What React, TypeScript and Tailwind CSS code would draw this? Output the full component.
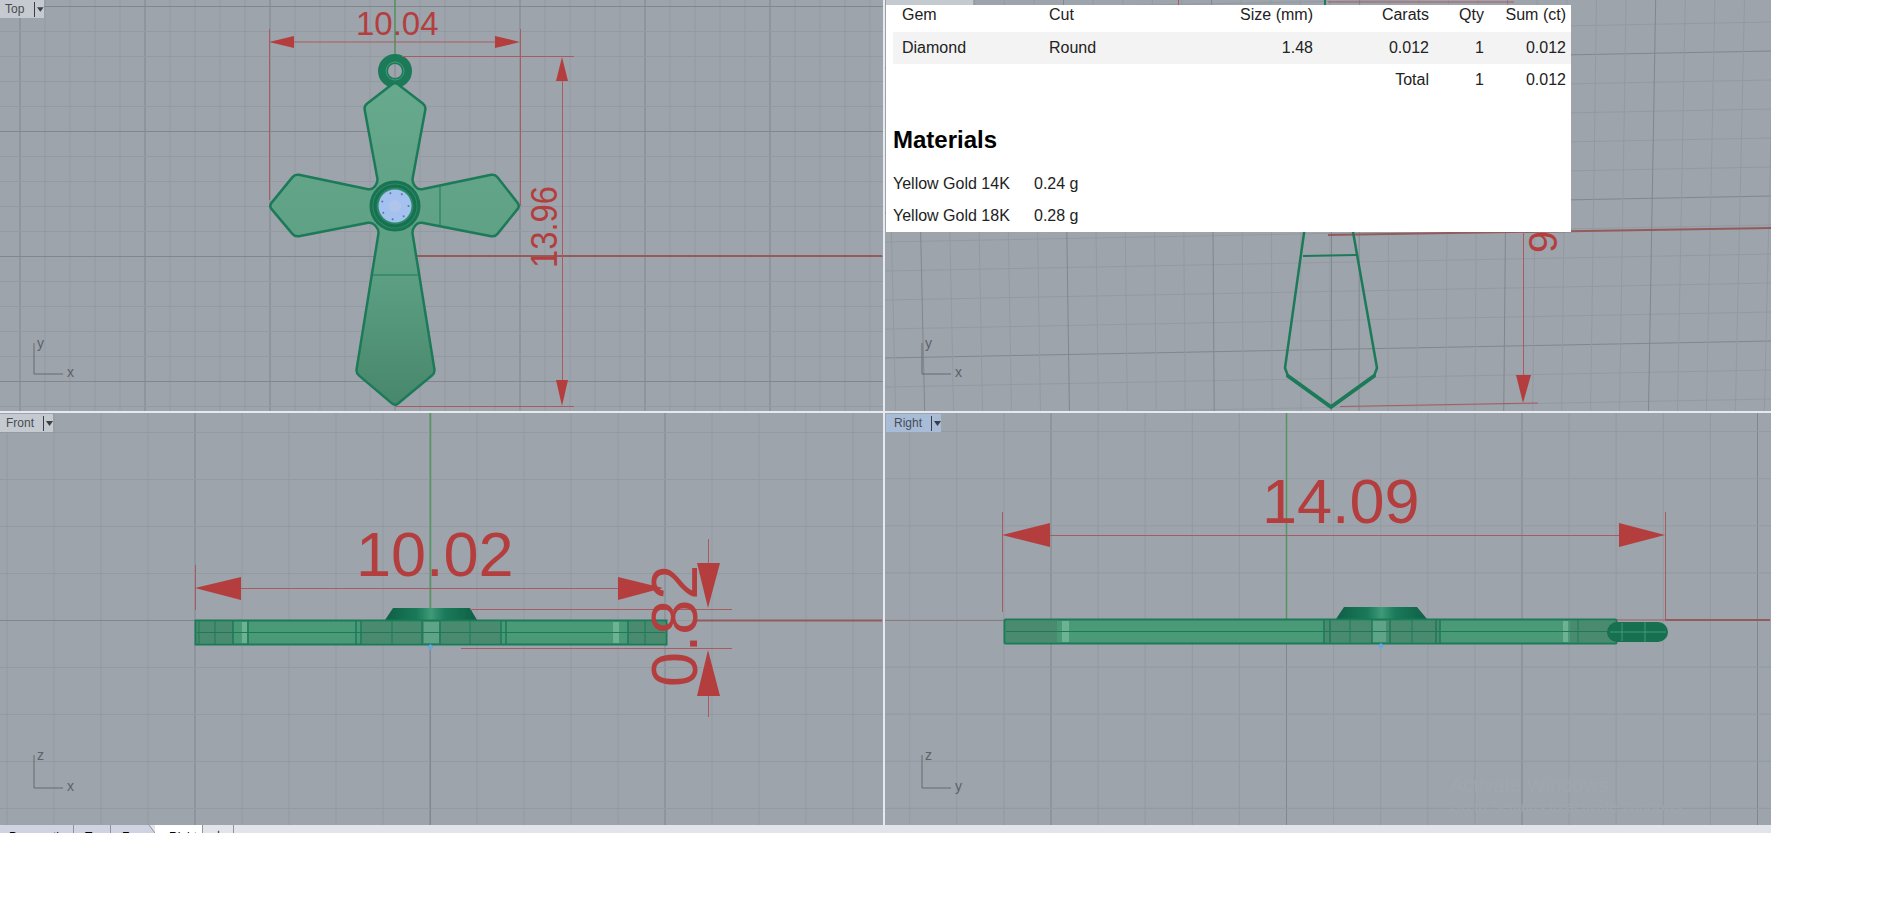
const RED = '#b43e3e'
const LINE = '#a65c60'
const AXIS = '#945a5c'
const GREEN = '#1c7a58'
const GREEN_AXIS = '#55965f'
const MINOR = '#939aa2'
const MAJOR = '#80878e'

const range = (from: number, to: number, step: number) => {
  const out: number[] = []
  for (let v = from; v <= to; v += step) out.push(v)
  return out
}

// Closed outline with its corners eased by `r` px
const roundedPath = (pts: number[][], r: number) => {
  const n = pts.length
  let d = ''
  pts.forEach((p, i) => {
    const a = pts[(i + n - 1) % n]
    const b = pts[(i + 1) % n]
    const la = Math.hypot(a[0] - p[0], a[1] - p[1])
    const lb = Math.hypot(b[0] - p[0], b[1] - p[1])
    const s = [p[0] + ((a[0] - p[0]) * r) / la, p[1] + ((a[1] - p[1]) * r) / la]
    const e = [p[0] + ((b[0] - p[0]) * r) / lb, p[1] + ((b[1] - p[1]) * r) / lb]
    d += `${i === 0 ? 'M' : 'L'}${s[0].toFixed(1)} ${s[1].toFixed(1)}Q${p[0]} ${p[1]} ${e[0].toFixed(1)} ${e[1].toFixed(1)}`
  })
  return d + 'Z'
}

const CROSS = [
  [395, 82], [426, 106], [412, 182], [418, 190], [495, 174], [520, 206], [495, 237], [418, 222], [412, 230],
  [435, 373], [395, 406], [356, 373], [379, 230], [372, 222], [295, 237], [269, 206], [295, 174], [372, 190], [378, 182], [364, 106],
]

// Flat view grid, lines every `step` px, a heavier one every fifth
function Grid({ x0, x1, y0, y1, ox, oy, step }: { x0: number; x1: number; y0: number; y1: number; ox: number; oy: number; step: number }) {
  const xs = range(ox - step * 5, x1, step).filter((x) => x >= x0)
  const ys = range(oy - step * 20, y1, step).filter((y) => y >= y0)
  return (
    <g>
      {xs.map((x) => {
        const k = Math.round((x - ox) / step)
        return <line key={x} x1={x} x2={x} y1={y0} y2={y1} stroke={k % 5 === 0 ? MAJOR : MINOR} strokeWidth={1} />
      })}
      {ys.map((y) => (
        <line key={y} x1={x0} x2={x1} y1={y} y2={y} stroke={MINOR} strokeWidth={1} />
      ))}
    </g>
  )
}

function Triangle({ points }: { points: string }) {
  return <polygon points={points} fill={RED} />
}

function DomeGradient({ id }: { id: string }) {
  return (
    <linearGradient id={id} x1="0" y1="0" x2="1" y2="0">
      <stop offset="0" stopColor="#0f5f45" />
      <stop offset="0.35" stopColor="#1a7a5a" />
      <stop offset="0.5" stopColor="#3f9a78" />
      <stop offset="0.65" stopColor="#1a7a5a" />
      <stop offset="1" stopColor="#0f5f45" />
    </linearGradient>
  )
}

function AxisIcon({ x, y, v, h, hx = 36, top = 31 }: { x: number; y: number; v: string; h: string; hx?: number; top?: number }) {
  return (
    <g>
      <path d={`M${x} ${y - top}V${y}H${x + 29}`} fill="none" stroke="#656b72" strokeWidth={1} />
      <text x={x + 3} y={y - top + 5} fontSize={14} fill="#5c6268">{v}</text>
      <text x={x + hx - 3} y={y + 3} fontSize={14} fill="#5c6268">{h}</text>
    </g>
  )
}

function ViewLabel({ name, className, textClass, active }: { name: string; className: string; textClass: string; active?: boolean }) {
  return (
    <div className={`absolute flex h-[18px] items-center ${className} ${active ? 'bg-[#a8bcd8]' : 'bg-[#c4cad0]'}`}>
      <span className={`text-[12px] text-[#474c52] ${textClass}`}>{name}</span>
      <span className="mx-[2px] h-[15px] w-px bg-[#3a3f45]" />
      <svg width="7" height="5" viewBox="0 0 7 5"><path d="M0 0h7L3.5 5z" fill="#3a3f45" /></svg>
    </div>
  )
}

function TopView() {
  return (
    <div className="relative h-full w-[883px] overflow-hidden bg-[#9da4ac]">
      <svg className="absolute inset-0 h-full w-full" viewBox="0 0 883 411">
        <defs>
          <linearGradient id="crossFill" gradientUnits="userSpaceOnUse" x1="0" y1="82" x2="0" y2="406">
            <stop offset="0" stopColor="#66a98c" />
            <stop offset="0.6" stopColor="#5c9f82" />
            <stop offset="1" stopColor="#47876b" />
          </linearGradient>
        </defs>
        <Grid x0={0} x1={883} y0={0} y1={411} ox={20} oy={6.5} step={25} />
        {[131.5, 256.5, 381.5, 6.5].map((y) => (
          <line key={y} x1={0} x2={883} y1={y} y2={y} stroke={MAJOR} />
        ))}
        <line x1={395} x2={395} y1={0} y2={56} stroke={GREEN_AXIS} strokeWidth={1.5} />
        <line x1={416} x2={882} y1={256} y2={256} stroke={AXIS} strokeWidth={2} />

        {/* pendant */}
        <ellipse cx={395} cy={71} rx={12} ry={12} fill="none" stroke={GREEN} strokeWidth={10} />
        <ellipse cx={395} cy={71} rx={9} ry={9} fill="none" stroke="#3f9c79" strokeWidth={1} />
        <path d={roundedPath(CROSS, 4)} fill="url(#crossFill)" stroke={GREEN} strokeWidth={2.5} strokeLinejoin="round" />
        <line x1={372} x2={418} y1={275} y2={275} stroke={GREEN} />
        <line x1={440} x2={440} y1={187} y2={226} stroke={GREEN} />
        <circle cx={395} cy={206} r={24} fill="#2a8a66" stroke="#1a7453" strokeWidth={3} />
        <circle cx={395} cy={206} r={20} fill="none" stroke="#17704f" strokeWidth={3} />
        <circle cx={395} cy={206} r={16.5} fill="#a5c1ef" />
        <circle cx={395} cy={206} r={6} fill="#afc6ea" />
        {[0, 50, 100, 150, 200, 250, 300].map((a) => (
          <circle key={a} cx={395 + 13.5 * Math.cos((a * Math.PI) / 180)} cy={206 + 13.5 * Math.sin((a * Math.PI) / 180)} r={1} fill="#5d74a6" />
        ))}

        {/* 10.04 */}
        <path d="M269.5 29V200M520.5 29V206M285 42H505" stroke={LINE} fill="none" />
        <Triangle points="269,42 294,36 294,48" />
        <Triangle points="520,42 495,36 495,48" />
        <text x={356} y={35} fontSize={33} fill={RED}>10.04</text>

        {/* 13.96 */}
        <path d="M402 56.5H574M395 406.5H574M562.5 70V395" stroke={LINE} fill="none" />
        <Triangle points="562,57 556,81 568,81" />
        <Triangle points="562,406 556,380 568,380" />
        <text transform="translate(557 268) rotate(-90)" fontSize={36} fill={RED} textLength={82} lengthAdjust="spacingAndGlyphs">13.96</text>

        <AxisIcon x={34} y={374} v="y" h="x" />
      </svg>
      <ViewLabel name="Top" className="left-0 top-0 w-[44px]" textClass="ml-[5px] w-[29px]" />
    </div>
  )
}

function PerspectiveView() {
  const ys = range(-48, 416, 29)
  const xs = range(-7, 174, 1).map((k) => 892 + 29.2 * k).filter((x) => x < 1775)
  return (
    <div className="relative h-full w-[886px] overflow-hidden bg-[#9da4ac]">
      <svg className="absolute inset-0 h-full w-full" viewBox="885 0 886 411">
        {ys.map((y, i) => (
          <line key={y} x1={885} x2={1771} y1={y} y2={y - 17} stroke={(i + 1) % 5 === 0 ? MAJOR : MINOR} />
        ))}
        {xs.map((x, i) => {
          const lean = (1331 - x) * 0.014
          return <line key={x} x1={x - lean} x2={x + lean * 0.6} y1={0} y2={411} stroke={(i + 2) % 5 === 0 ? MAJOR : MINOR} />
        })}
        <line x1={1331.5} x2={1331.5} y1={230} y2={411} stroke={MAJOR} />

        <path d="M1178.5 0V6M1328 2H1514" stroke={LINE} fill="none" />
        <line x1={1325} x2={1325} y1={0} y2={6} stroke={GREEN} strokeWidth={2} />
        <line x1={1328} x2={1771} y1={235} y2={228} stroke={AXIS} strokeWidth={2} />

        {/* lower arm seen through */}
        <path d="M1305 226L1285 368L1288 376L1331 407L1374 376L1377 368L1352 226" fill="none" stroke={GREEN} strokeWidth={2.5} strokeLinejoin="round" />
        <path d="M1288 376L1331 407L1374 376" fill="none" stroke={GREEN} strokeWidth={4} strokeLinejoin="round" strokeLinecap="round" />
        <line x1={1303} x2={1356} y1={256} y2={255} stroke={GREEN} strokeWidth={2} />

        <path d="M1523.5 226V380M1340 406.5L1538 403" stroke={LINE} fill="none" />
        <Triangle points="1523,403 1516,375 1531,375" />
        <text transform="translate(1557 253) rotate(-90)" fontSize={40} fill={RED}>9</text>

        <AxisIcon x={922} y={374} v="y" h="x" />
      </svg>
      <div className="absolute left-[1px] top-0 h-[5px] w-[87px] bg-[#c4cad0]" />

      {/* gem and material summary */}
      <div className="absolute left-[1px] top-[5px] flex h-[227px] w-[685px] flex-col bg-white pl-[7px] text-[16px] leading-[20px] text-[#222222]">
        <table className="w-full table-fixed border-collapse">
          <colgroup>
            <col className="w-[147px]" />
            <col className="w-[160px]" />
            <col className="w-[118px]" />
            <col className="w-[116px]" />
            <col className="w-[55px]" />
            <col />
          </colgroup>
          <thead>
            <tr className="h-[27px] font-normal">
              <th className="pb-[7px] pl-[9px] text-left font-normal">Gem</th>
              <th className="pb-[7px] pl-[9px] text-left font-normal">Cut</th>
              <th className="pb-[7px] pr-[5px] text-right font-normal">Size (mm)</th>
              <th className="pb-[7px] pr-[5px] text-right font-normal">Carats</th>
              <th className="pb-[7px] pr-[5px] text-right font-normal">Qty</th>
              <th className="pb-[7px] pr-[5px] text-right font-normal">Sum (ct)</th>
            </tr>
          </thead>
          <tbody>
            <tr className="h-[32px] bg-[#f3f3f3]">
              <td className="pl-[9px]">Diamond</td>
              <td className="pl-[9px]">Round</td>
              <td className="pr-[5px] text-right">1.48</td>
              <td className="pr-[5px] text-right">0.012</td>
              <td className="pr-[5px] text-right">1</td>
              <td className="pr-[5px] text-right">0.012</td>
            </tr>
            <tr className="h-[32px]">
              <td />
              <td />
              <td />
              <td className="pr-[5px] text-right">Total</td>
              <td className="pr-[5px] text-right">1</td>
              <td className="pr-[5px] text-right">0.012</td>
            </tr>
          </tbody>
        </table>
        <h2 className="mt-[28px] text-[24px] font-bold leading-[32px] text-black">Materials</h2>
        <div className="mt-[12px] grid grid-cols-[141px_1fr]">
          <div className="flex h-[32px] items-center">Yellow Gold 14K</div>
          <div className="flex h-[32px] items-center">0.24 g</div>
          <div className="flex h-[32px] items-center">Yellow Gold 18K</div>
          <div className="flex h-[32px] items-center">0.28 g</div>
        </div>
      </div>
    </div>
  )
}

function FrontView() {
  return (
    <div className="relative h-full w-[883px] overflow-hidden bg-[#9da4ac]">
      <svg className="absolute inset-0 h-full w-full" viewBox="0 413 883 412">
        <defs>
          <DomeGradient id="domeFill" />
        </defs>
        <Grid x0={0} x1={883} y0={413} y1={825} ox={195} oy={620.5} step={47} />
        <line x1={0} x2={195} y1={620.5} y2={620.5} stroke={MAJOR} />
        <line x1={430.5} x2={430.5} y1={413} y2={620} stroke={GREEN_AXIS} strokeWidth={1.5} />
        <line x1={430.5} x2={430.5} y1={644} y2={825} stroke={MAJOR} />
        <line x1={697} x2={882} y1={620.5} y2={620.5} stroke={AXIS} strokeWidth={2} />

        {/* side profile */}
        <polygon points="385,620 393,608 470,608 477,620" fill="url(#domeFill)" />
        <rect x={195.5} y={620.5} width={471} height={24} fill="#4a9a78" />
        <rect x={197} y={622} width={36} height={21} fill="#4a8a6e" />
        <rect x={362} y={622} width={138} height={21} fill="#4a8a6e" />
        <rect x={628} y={622} width={37} height={21} fill="#4a8a6e" />
        <rect x={242} y={622} width={5} height={21} fill="#6db392" />
        <rect x={424} y={622} width={15} height={21} fill="#5fa486" />
        <rect x={613} y={622} width={6} height={21} fill="#6db392" />
        <path d="M197 632.5H665M199 621V644M215 621V644M392 621V644M470 621V644M645 621V644" stroke={GREEN} fill="none" />
        <path d="M233 621V644M248 621V644M356 621V644M361 621V644M422 621V644M440 621V644M501 621V644M506 621V644M628 621V644" stroke={GREEN} strokeWidth={1.5} fill="none" />
        <rect x={195.5} y={620.5} width={471} height={24} fill="none" stroke={GREEN} strokeWidth={2} />
        <path d="M430.5 644l-3 3 3 3 3-3z" fill="#63a8e0" />

        {/* 10.02 */}
        <path d="M195.5 565V610M241 588.5H620" stroke={LINE} fill="none" />
        <Triangle points="195,588 241,577 241,600" />
        <Triangle points="663,588 618,577 618,600" />
        <text x={356} y={576} fontSize={63} fill={RED}>10.02</text>

        {/* 0.82 */}
        <path d="M708.5 539V563M708.5 696V717M470 609.5H732M461 648.5H732" stroke={LINE} fill="none" />
        <Triangle points="708,608 697,563 720,563" />
        <Triangle points="708,650 697,696 720,696" />
        <text transform="translate(697 687) rotate(-90)" fontSize={64} fill={RED} textLength={122} lengthAdjust="spacingAndGlyphs">0.82</text>

        <AxisIcon x={34} y={788} v="z" h="x" top={33} />
      </svg>
      <ViewLabel name="Front" className="left-0 top-[1px] w-[53px]" textClass="ml-[6px] w-[35px]" />
    </div>
  )
}

function RightView() {
  return (
    <div className="relative h-full w-[886px] overflow-hidden bg-[#9da4ac]">
      <svg className="absolute inset-0 h-full w-full" viewBox="885 413 886 412">
        <defs>
          <DomeGradient id="domeFillRight" />
        </defs>
        <Grid x0={885} x1={1771} y0={413} y1={825} ox={1051} oy={620} step={47.1} />
        <line x1={885} x2={1004} y1={620.5} y2={620.5} stroke="#8a7c80" />
        <line x1={1286.5} x2={1286.5} y1={413} y2={619} stroke={GREEN_AXIS} strokeWidth={1.5} />
        <line x1={1617} x2={1665} y1={620} y2={620} stroke={LINE} />
        <line x1={1665} x2={1770} y1={620} y2={620} stroke={AXIS} strokeWidth={2} />

        <text x={1450} y={792} fontSize={20} fill="#a0a7ae">Activate Windows</text>
        <text x={1450} y={812} fontSize={15} fill="#9fa6ae">Go to Settings to activate Windows.</text>

        {/* side profile */}
        <polygon points="1336,619 1344,607 1417,607 1427,619" fill="url(#domeFillRight)" />
        <rect x={1004.5} y={619.5} width={612} height={24} rx={1} fill="#4a9a78" />
        <rect x={1006} y={621} width={51} height={21} fill="#4a8a6e" />
        <rect x={1324} y={621} width={116} height={21} fill="#4a8a6e" />
        <rect x={1570} y={621} width={46} height={21} fill="#4a8a6e" />
        <rect x={1062} y={621} width={7} height={21} fill="#6db392" />
        <rect x={1372} y={621} width={14} height={21} fill="#5fa486" />
        <rect x={1563} y={621} width={5} height={21} fill="#6db392" />
        <path d="M1006 631.5H1616M1350 620V643M1412 620V643M1578 620V643" stroke={GREEN} fill="none" />
        <path d="M1324 620V643M1330 620V643M1372 620V643M1390 620V643M1436 620V643M1440 620V643" stroke={GREEN} strokeWidth={1.5} fill="none" />
        <rect x={1004.5} y={619.5} width={612} height={24} rx={1} fill="none" stroke={GREEN} strokeWidth={2} />
        <rect x={1607} y={622} width={61} height={20} rx={10} fill="#17704f" />
        <path d="M1622 623V641M1645 622V642M1610 632H1666" stroke="#3f9a78" fill="none" />
        <path d="M1381 643l-3 3 3 3 3-3z" fill="#63a8e0" />

        {/* 14.09 */}
        <path d="M1002.5 512V612M1665.5 512V620M1045 535.5H1625" stroke={LINE} fill="none" />
        <Triangle points="1002,535 1050,523 1050,547" />
        <Triangle points="1665,535 1619,523 1619,547" />
        <text x={1262} y={523} fontSize={63} fill={RED}>14.09</text>

        <AxisIcon x={922} y={788} v="z" h="y" top={33} />
      </svg>
      <ViewLabel name="Right" active className="left-[1px] top-[1px] w-[55px]" textClass="ml-[8px] w-[35px]" />
    </div>
  )
}

function Tabs() {
  return (
    <div className="flex h-[8px] overflow-hidden bg-[#e2e4ea] text-[12px] leading-[14px] text-black">
      <div className="w-[74px] border-r border-[#8f939c] bg-[#d0d4e2] pl-[9px] pt-[5px]">Perspective</div>
      <div className="w-[37px] border-r border-[#8f939c] bg-[#d0d4e2] pl-[11px] pt-[5px]">Top</div>
      <div className="w-[37px] bg-[#d0d4e2] pl-[11px] pt-[5px]">Front</div>
      <svg className="h-[8px] w-[7px] shrink-0" viewBox="0 0 7 8">
        <path d="M0 0H1L7 8H0Z" fill="#d0d4e2" />
        <path d="M1 0L7 8" stroke="#8f939c" />
      </svg>
      <div className="w-[48px] border-r border-[#8f939c] bg-white pl-[14px] pt-[5px]">Right</div>
      <div className="w-[31px] border-r border-[#8f939c] pl-[12px] pt-[2px]">+</div>
    </div>
  )
}

export default function App() {
  return (
    <div className="h-[899px] w-[1884px] overflow-hidden bg-white font-['Liberation_Sans',Arial,sans-serif]">
      <div className="w-[1771px]">
        <div className="flex h-[411px] bg-[#e6eaf0]">
          <TopView />
          <div className="w-[2px]" />
          <PerspectiveView />
        </div>
        <div className="h-[2px] bg-[#e6eaf0]" />
        <div className="flex h-[412px] bg-[#e6eaf0]">
          <FrontView />
          <div className="w-[2px]" />
          <RightView />
        </div>
        <Tabs />
      </div>
    </div>
  )
}
